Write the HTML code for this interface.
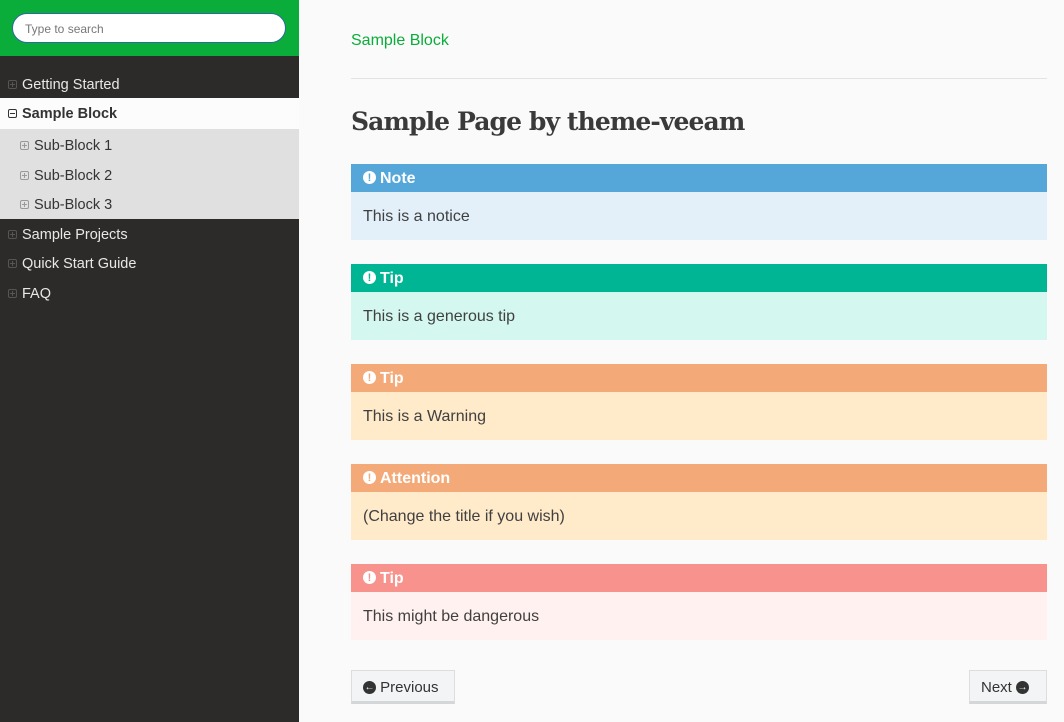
<!DOCTYPE html>
<html><head><meta charset="utf-8"><style>
*{box-sizing:border-box;margin:0;padding:0}
body{width:1064px;height:722px;overflow:hidden;background:#fafafa;font-family:"Liberation Sans",Arial,sans-serif;position:relative}
#side{position:absolute;left:0;top:0;width:299px;height:722px;background:#2d2b29}
#top{height:56px;background:#0aad3a;position:relative}
#search{position:absolute;left:12px;top:13px;width:274px;height:30px;background:#fff;border:1px solid #2a6aa0;border-radius:15px;font-size:12px;color:#777;padding:8px 12px}
.it{position:absolute;left:0;width:299px;height:30px;line-height:32px;font-size:14.5px;color:#e8e8e8;padding-left:22px}
.it .b{position:absolute;left:8px;top:11px;width:9px;height:9px;border:1px solid #555;border-radius:2px}
.it .b:before{content:"";position:absolute;left:1px;top:3px;width:5px;height:1px;background:#555}
.it .b:after{content:"";position:absolute;left:3px;top:1px;width:1px;height:5px;background:#555}
.cur{background:#fcfcfc;color:#333;font-weight:bold}
.cur .b{border-color:#333}.cur .b:before{background:#333}.cur .b:after{display:none}
.sub{background:#e0e0e0;color:#333;padding-left:34px}
.sub .b{left:20px;border-color:#999}.sub .b:before,.sub .b:after{background:#999}
#main{position:absolute;left:351px;top:0;width:696px}
.crumb{position:absolute;top:32px;color:#0aad3a;font-size:16px}
.hr{position:absolute;top:78px;left:0;width:696px;height:1px;background:#e1e4e5}
h1{position:absolute;top:107px;font-family:"DejaVu Serif",serif;font-size:25px;color:#3a3a3a;font-weight:bold;letter-spacing:-0.9px;white-space:nowrap}
.ad{position:absolute;left:0;width:696px}
.ad .h{height:28px;line-height:30px;color:#fff;font-weight:bold;font-size:16px;padding-left:12px}
.ad .h i{display:inline-block;width:13px;height:13px;border-radius:50%;background:#fff;vertical-align:-1px;margin-right:4px;position:relative;font-style:normal}
.ad .h i:after{content:"!";position:absolute;left:0;width:13px;text-align:center;top:-8px;font-size:11px;font-weight:bold}
.ad .c{height:48px;line-height:50px;padding-left:12px;font-size:16px;color:#404040}
.btn{position:absolute;top:670px;height:34px;line-height:34px;background:#f2f4f5;border:1px solid #ddd;border-bottom:3px solid #d4d7d8;font-size:15px;color:#333;padding:0 11px;white-space:nowrap}
.ci{display:inline-block;width:13px;height:13px;border-radius:50%;background:#333;color:#f2f4f5;font-size:10px;line-height:13px;text-align:center;vertical-align:middle;font-weight:bold;position:relative;top:-1px}
</style></head><body>
<div id="side">
<div id="top"><div id="search">Type to search</div></div>
<div class="it" style="top:69px"><span class="b"></span>Getting Started</div>
<div class="it cur" style="top:98px;height:31px;line-height:33px"><span class="b"></span>Sample Block</div>
<div style="position:absolute;top:129px;left:0;width:299px;height:90px;background:#e0e0e0"></div>
<div class="it sub" style="top:130px"><span class="b"></span>Sub-Block 1</div>
<div class="it sub" style="top:160px"><span class="b"></span>Sub-Block 2</div>
<div class="it sub" style="top:189px"><span class="b"></span>Sub-Block 3</div>
<div class="it" style="top:219px"><span class="b"></span>Sample Projects</div>
<div class="it" style="top:248px"><span class="b"></span>Quick Start Guide</div>
<div class="it" style="top:278px"><span class="b"></span>FAQ</div>
</div>
<div id="main">
<div class="crumb">Sample Block</div>
<div class="hr"></div>
<h1>Sample Page by theme-veeam</h1>
<div class="ad" style="top:164px"><div class="h" style="background:#54a7d8"><i style="color:#54a7d8"></i>Note</div><div class="c" style="background:#e3f0f9">This is a notice</div></div>
<div class="ad" style="top:264px"><div class="h" style="background:#00b594"><i style="color:#00b594"></i>Tip</div><div class="c" style="background:#d4f8ef">This is a generous tip</div></div>
<div class="ad" style="top:364px"><div class="h" style="background:#f3aa78"><i style="color:#f3aa78"></i>Tip</div><div class="c" style="background:#ffeaca">This is a Warning</div></div>
<div class="ad" style="top:464px"><div class="h" style="background:#f3aa78"><i style="color:#f3aa78"></i>Attention</div><div class="c" style="background:#ffeaca">(Change the title if you wish)</div></div>
<div class="ad" style="top:564px"><div class="h" style="background:#f7928c"><i style="color:#f7928c"></i>Tip</div><div class="c" style="background:#fff1ef">This might be dangerous</div></div>
<div class="btn" style="left:0;width:104px"><span class="ci">&#8592;</span> Previous</div>
<div class="btn" style="left:618px;width:78px">Next <span class="ci">&#8594;</span></div>
</div>
</body></html>
